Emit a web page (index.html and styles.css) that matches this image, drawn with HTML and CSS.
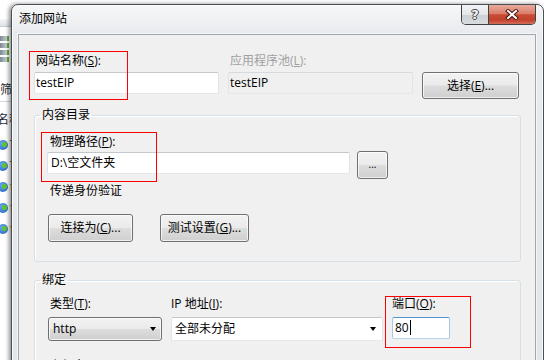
FILE: index.html
```html
<!DOCTYPE html>
<html lang="zh-CN">
<head>
    <meta charset="UTF-8">
    <meta name="viewport" content="width=device-width, initial-scale=1.0">
    <title>添加网站</title>
    <link rel="stylesheet" href="styles.css">
</head>
<body>
    <!-- IIS manager window behind the dialog -->
    <div class="behind">
        <div class="bh-toolbar"></div>
        <div class="bh-server"><span></span><span></span><span></span><span></span></div>
        <div class="bh-filter">筛选</div>
        <div class="bh-head">名称</div>
        <ul class="bh-list">
            <li><span class="globe"></span>Test</li>
            <li><span class="globe"></span>Test2</li>
            <li><span class="globe"></span>test</li>
            <li><span class="globe"></span>test</li>
            <li><span class="globe"></span>test</li>
        </ul>
    </div>

    <div class="dialog">
        <div class="titlebar">
            <span class="title">添加网站</span>
            <div class="caption-btns">
                <div class="cap-btn help"><span>?</span></div>
                <div class="cap-btn close">
                    <svg width="14" height="11" viewBox="0 0 14 11">
                        <path d="M3 2 L11 9 M11 2 L3 9" stroke="#4a1a12" stroke-width="4" stroke-linecap="square" fill="none"/>
                        <path d="M3 2 L11 9 M11 2 L3 9" stroke="#fff" stroke-width="2" stroke-linecap="square" fill="none"/>
                    </svg>
                </div>
            </div>
        </div>

        <div class="client">
            <div class="site-grid">
                <label class="field-label">网站名称(<u>S</u>):</label>
                <label class="field-label disabled">应用程序池(<u>L</u>):</label>
                <span></span>
                <div class="textbox">testEIP</div>
                <div class="textbox readonly">testEIP</div>
                <div class="btn select-btn">选择(<u>E</u>)...</div>
            </div>

            <fieldset class="group">
                <legend>内容目录</legend>
                <div class="group-body content-body">
                    <label class="field-label">物理路径(<u>P</u>):</label>
                    <div class="path-row">
                        <div class="textbox path-box">D:\空文件夹</div>
                        <div class="btn browse-btn">...</div>
                    </div>
                    <div class="note">传递身份验证</div>
                    <div class="btn-row">
                        <div class="btn connect-btn">连接为(<u>C</u>)...</div>
                        <div class="btn test-btn">测试设置(<u>G</u>)...</div>
                    </div>
                </div>
            </fieldset>

            <fieldset class="group">
                <legend>绑定</legend>
                <div class="group-body binding-body">
                    <div class="binding-grid">
                        <label class="field-label type-label">类型(<u>T</u>):</label>
                        <label class="field-label">IP 地址(<u>I</u>):</label>
                        <label class="field-label">端口(<u>O</u>):</label>
                        <div class="btn combo">http<span class="arrow"></span></div>
                        <div class="textbox combo-edit">全部未分配<span class="arrow"></span></div>
                        <div class="textbox focused">80<span class="caret"></span></div>
                    </div>
                    <label class="field-label host-label">主机名(<u>H</u>):</label>
                </div>
            </fieldset>

            <!-- red annotation boxes -->
            <div class="mark mark-name"></div>
            <div class="mark mark-path"></div>
            <div class="mark mark-port"></div>
        </div>
    </div>
</body>
</html>
```

FILE: styles.css
```css
* {
    margin: 0;
    padding: 0;
    box-sizing: border-box;
}

html,
body {
    width: 544px;
    height: 360px;
    overflow: hidden;
}

body {
    position: relative;
    font-family: "Open Sans", "Noto Sans CJK SC", sans-serif;
    font-size: 12px;
    line-height: 16px;
    color: #000;
    background: #fff;
}

u {
    text-decoration: underline;
    text-underline-offset: 1px;
}

/* window behind */
.behind {
    width: 120px;
    color: #1e2a36;
}

.bh-toolbar {
    height: 8px;
    margin-top: 19px;
    background: linear-gradient(#f6f7f9, #dde2e8);
    border-bottom: 1px solid #c3cad2;
}

.bh-server {
    width: 9px;
    margin-top: 9px;
    display: flex;
    flex-direction: column;
    gap: 2px;
}

.bh-server span {
    height: 5px;
    background: linear-gradient(90deg, #7d8790, #c9d0d6);
    border-right: 2px solid #5cae3e;
}

.bh-filter {
    margin-top: 20px;
    border-bottom: 1px solid #d3d8de;
    padding-bottom: 3px;
}

.bh-head {
    margin-top: 10px;
    margin-left: -3px;
}

.bh-list {
    list-style: none;
    margin-top: 6px;
}

.bh-list li {
    height: 21px;
    display: flex;
    align-items: center;
    gap: 2px;
    margin-left: -2px;
}

.globe {
    width: 10px;
    height: 10px;
    border-radius: 50%;
    background: radial-gradient(circle at 65% 45%, #5fc23a 0 28%, transparent 30%), radial-gradient(circle at 40% 35%, #6aa8f0, #1f5fb8);
}

/* dialog */
.dialog {
    position: absolute;
    left: 11px;
    top: 4px;
    width: 533px;
    height: 370px;
    border: 1px solid #4a4f55;
    border-radius: 7px 7px 0 0;
    background: linear-gradient(180deg, #f6f7f8 0%, #e8ebee 28px, #e3e6e9 100%);
    box-shadow: -2px 0 4px rgba(0, 0, 0, 0.45), inset 0 0 0 1px rgba(255, 255, 255, 0.75);
}

.titlebar {
    height: 29px;
    display: flex;
    justify-content: space-between;
    align-items: flex-start;
    padding: 0 7px 0 7px;
}

.title {
    padding-top: 6px;
}

.caption-btns {
    display: flex;
    height: 20px;
    border: 1px solid #3d4247;
    border-top: none;
    border-radius: 0 0 5px 5px;
    overflow: hidden;
}

.cap-btn {
    display: flex;
    align-items: center;
    justify-content: center;
}

.help {
    width: 27px;
    border-right: 1px solid #3d4247;
    background: linear-gradient(#f3f4f5 0%, #e4e6e8 50%, #cdd1d5 55%, #d9dcdf 100%);
}

.help span {
    font-family: "DejaVu Sans", sans-serif;
    font-weight: bold;
    font-size: 13px;
    color: #f4f4f4;
    text-shadow: 1px 0 0 #444, -1px 0 0 #444, 0 1px 0 #444, 0 -1px 0 #444;
}

.close {
    width: 46px;
    background: linear-gradient(#e8ab9f 0%, #db7d6c 45%, #c74a33 52%, #c2432d 80%, #d36b58 100%);
}

/* client area */
.client {
    position: relative;
    margin: 0 7px 0 6px;
    height: 340px;
    background: #f0f0f0;
    border: 1px solid #9ea7b0;
    box-shadow: 0 0 0 1px rgba(255, 255, 255, 0.6);
    padding: 18px 0 0 15px;
}

.field-label {
    display: block;
    padding-left: 2px;
}

.field-label.disabled {
    color: #a0a0a0;
}

.site-grid {
    display: grid;
    grid-template-columns: 185px 185px 97px;
    column-gap: 9px;
    row-gap: 3px;
    align-items: start;
}

.textbox {
    position: relative;
    height: 22px;
    line-height: 20px;
    padding-left: 1px;
    background: #fff;
    border: 1px solid;
    border-color: #c4c7cc #dfe3e8 #e5e9ee #dfe3e8;
    border-radius: 2px;
    white-space: nowrap;
}

.textbox.readonly {
    background: #f0f0f0;
    border-color: #d6d9dd #e1e4e8 #e5e8eb #e1e4e8;
}

.btn {
    display: flex;
    align-items: center;
    justify-content: center;
    height: 28px;
    border: 1px solid #707070;
    border-radius: 3px;
    background: linear-gradient(#f2f2f2 0%, #ebebeb 48%, #dddddd 52%, #cfcfcf 100%);
    box-shadow: inset 0 0 0 1px rgba(255, 255, 255, 0.7);
    white-space: nowrap;
}

.select-btn {
    height: 27px;
}

/* group boxes */
.group {
    width: 487px;
    border: 1px solid #d5dfe5;
    border-radius: 3px;
    padding: 0;
    box-shadow: inset 1px 1px 0 #fff;
}

.group legend {
    margin-left: 5px;
    padding: 0 2px;
    line-height: 16px;
}

.group:first-of-type {
    margin-top: 8px;
}

.group-body {
    padding-left: 12px;
}

.content-body {
    padding-top: 11px;
    padding-bottom: 19px;
}

.content-body .field-label,
.note {
    padding-left: 3px;
}

.path-row {
    display: flex;
    align-items: flex-start;
    gap: 7px;
    margin-top: 1px;
}

.path-box {
    width: 303px;
    margin-top: 1px;
    padding-left: 3px;
}

.browse-btn {
    width: 31px;
    font-size: 10px;
    line-height: 10px;
    padding-bottom: 3px;
}

.note {
    margin-top: 4px;
}

.btn-row {
    display: flex;
    gap: 27px;
    margin-top: 15px;
    margin-left: 1px;
}

.connect-btn {
    width: 85px;
}

.test-btn {
    width: 89px;
}

.group + .group {
    margin-top: 10px;
    height: 100px;
}

.binding-body {
    padding-top: 8px;
    padding-left: 13px;
}

.binding-grid {
    display: grid;
    grid-template-columns: 114px 212px 58px;
    column-gap: 9px;
    row-gap: 5px;
    align-items: start;
}

.binding-grid .field-label {
    padding-left: 0;
}

.binding-grid .type-label {
    padding-left: 2px;
}

.combo {
    position: relative;
    height: 24px;
    justify-content: flex-start;
    padding-left: 4px;
}

.combo-edit {
    height: 24px;
    line-height: 22px;
    padding-left: 3px;
}

.arrow {
    position: absolute;
    right: 5px;
    top: 9px;
    width: 0;
    height: 0;
    border-left: 3.5px solid transparent;
    border-right: 3.5px solid transparent;
    border-top: 4px solid #000;
}

.combo-edit .arrow {
    right: 6px;
    top: 9px;
}

.focused {
    border-color: #5593d0 #a8c8e8 #b7d3ee #a8c8e8;
    padding-left: 2px;
}

.caret {
    display: inline-block;
    width: 1px;
    height: 15px;
    margin-left: 1px;
    vertical-align: -3px;
    background: #000;
}

.host-label {
    margin-top: 17px;
}

/* annotations */
.mark {
    position: absolute;
    z-index: 1;
    box-shadow: inset 0 0 0 1px rgb(255, 0, 0);
}

.mark-name {
    left: 10px;
    top: 16px;
    width: 99px;
    height: 49px;
}

.mark-path {
    left: 22px;
    top: 97px;
    width: 116px;
    height: 50px;
}

.mark-port {
    left: 366px;
    top: 261px;
    width: 86px;
    height: 52px;
}
```
